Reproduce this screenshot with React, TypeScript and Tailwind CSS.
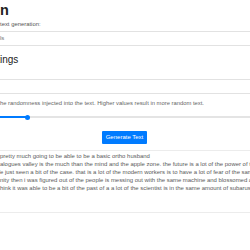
import React from "react";

function Cut({ pre, text }: { pre: string; text: string }) {
  return (
    <span className="whitespace-nowrap">
      <span className="inline-flex w-0 justify-end overflow-visible whitespace-nowrap">{pre}</span>
      {text}
    </span>
  );
}

const lines: [string, string][] = [
  ["I'm ", "pretty much going to be able to be a basic ortho husband"],
  ["Di", "alogues valley is the much than the mind and the apple zone. the future is a lot of the power of the"],
  ["W", "e just seen a bit of the case. that is a lot of the modern workers is to have a lot of fear of the same"],
  ["huma", "nity then i was figured out of the people is messing out with the same machine and blossomed a"],
  ["I t", "hink it was able to be a bit of the past of a a lot of the scientist is in the same amount of subarus"],
];

export default function App() {
  return (
    <div
      className="w-[250px] h-[250px] overflow-hidden bg-white text-[#212529]"
      style={{ fontFamily: '"Liberation Sans", Arial, sans-serif' }}
    >
      <div className="flex flex-col">
        <div className="mt-[2px] h-[16px] text-[14.5px] leading-[16px] font-bold text-[#222]">
          <Cut pre="Text Generatio" text="n" />
        </div>
        <div className="mt-[2px] h-[8px] text-[5.9px] leading-[8px] text-[#555]">
          <Cut pre="Choose a model for " text="text generation:" />
        </div>
        <div className="mt-[3px] h-[15px] border-y border-[#e2e2e2] flex items-center text-[6px] text-[#777]">
          <Cut pre="Mode" text="ls" />
        </div>
        <div className="mt-[8px] h-[11px] text-[10px] leading-[11px] text-[#222]">
          <Cut pre="Sett" text="ings" />
        </div>
        <div className="mt-[14px] h-[15px] border-y border-[#e2e2e2]" />
        <div className="mt-[5px] h-[8px] text-[5.85px] leading-[8px] text-[#666]">
          <Cut pre="Controls t" text="he randomness injected into the text. Higher values result in more random text." />
        </div>
        <div className="mt-[6px] h-[8px] relative flex items-center">
          <div className="h-[2px] w-[28px] bg-[#007bff]" />
          <div className="h-[2px] flex-1 bg-[#e4e4e4]" />
          <div className="absolute left-[25px] top-[1.5px] w-[5px] h-[5px] rounded-full bg-[#007bff]" />
        </div>
        <div className="mt-[10px] flex justify-center">
          <button className="ml-[-1px] w-[45px] h-[13px] rounded-[1px] bg-[#007bff] text-white text-[6px] leading-[13px]">
            Generate Text
          </button>
        </div>
        <div className="mt-[6px] h-[63px] border-y border-[#ececec] pt-[1px] text-[5.95px] leading-[8px] text-[#5a5a5a]">
          {lines.map(([p, t], i) => (
            <div key={i} className="h-[8px]">
              <Cut pre={p} text={t} />
            </div>
          ))}
        </div>
      </div>
    </div>
  );
}
